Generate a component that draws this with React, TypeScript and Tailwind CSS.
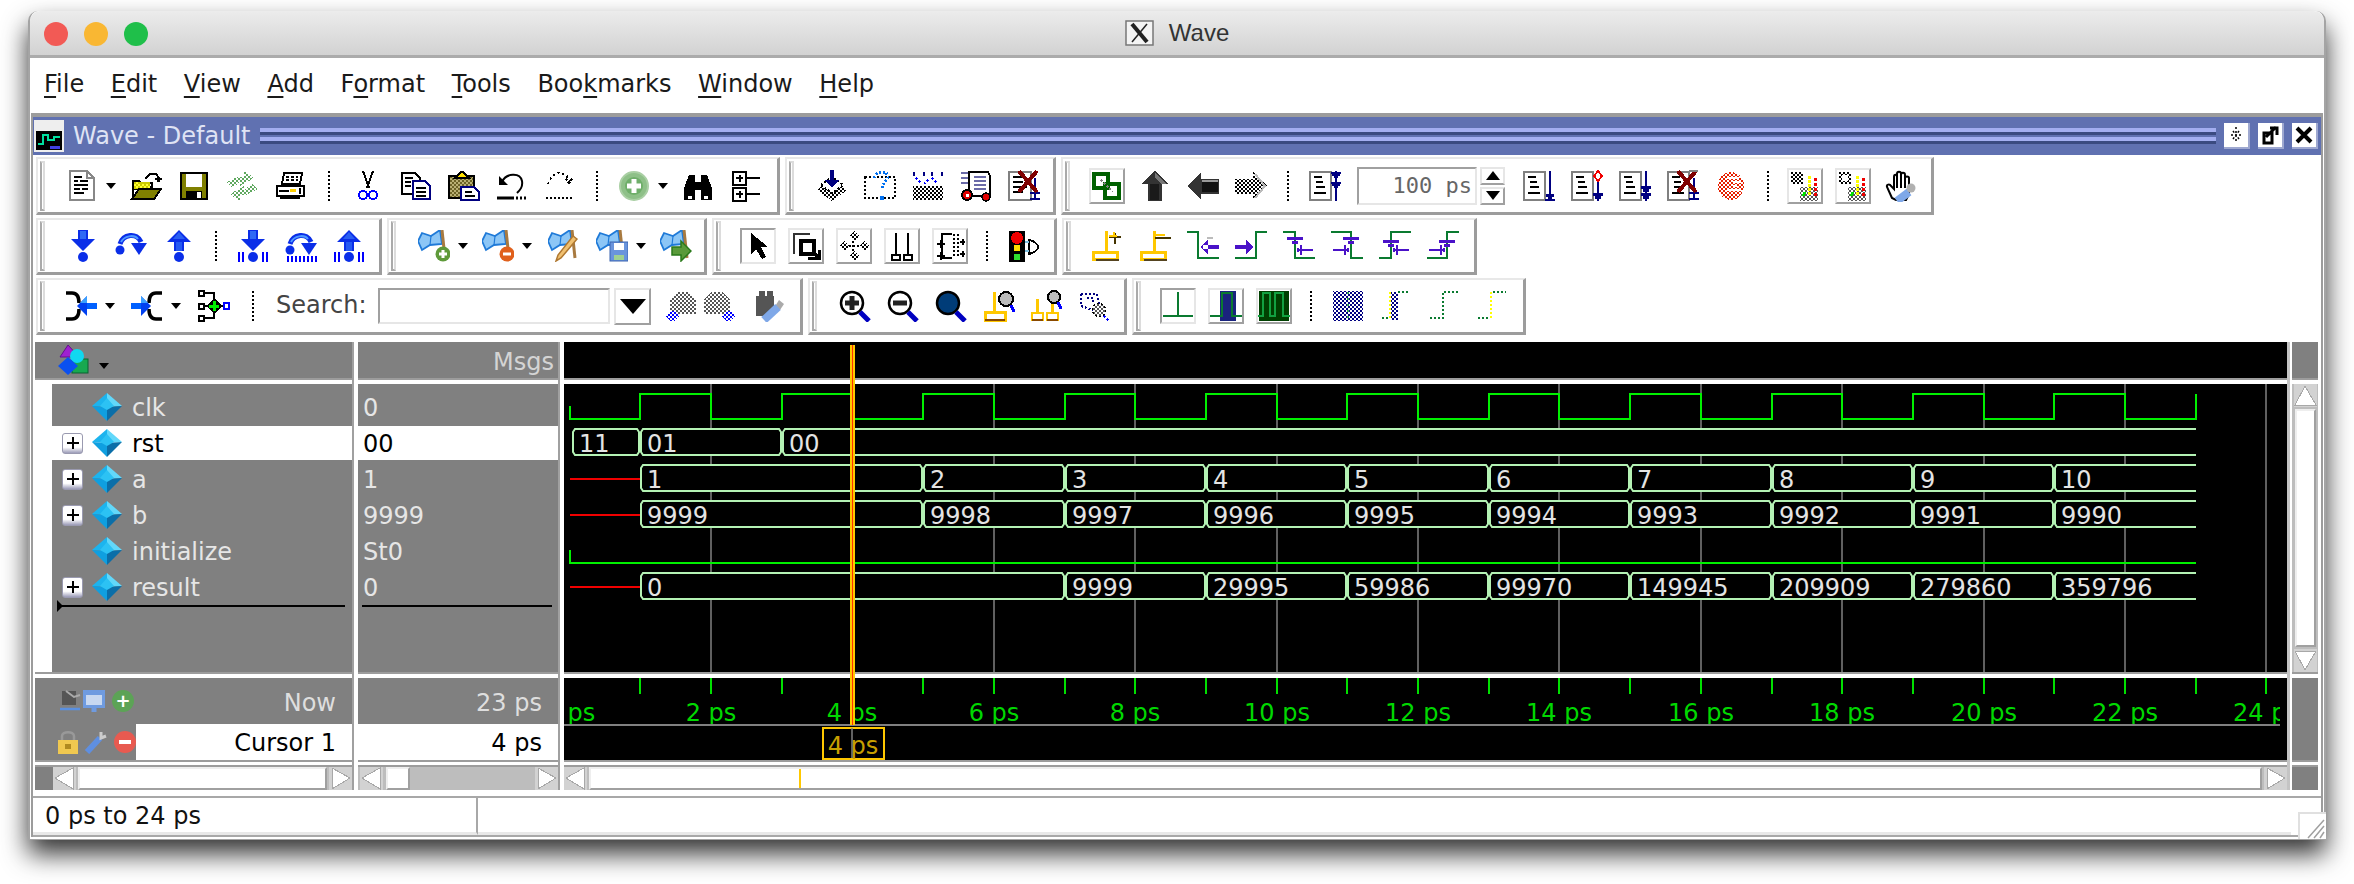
import type { ReactNode } from "react"

// wave geometry: 1 ps = 70.7px, 0 ps at x = 569.6 (page coordinates)
const px = (ps: number) => Math.round(569.6 + 70.7 * ps)

const Ic = ({ children, smooth }: { children: ReactNode; smooth?: boolean }) => (
  <svg viewBox="0 0 32 32" width={32} height={32} fill="none" shapeRendering={smooth ? "auto" : "crispEdges"}>
    {children}
  </svg>
)

const Patterns = () => {
  const list: [string, string][] = [
    ["pk", "#000"],
    ["pb", "#0000ff"],
    ["pn", "#000080"],
    ["pg", "#5fa85f"],
    ["pr", "#e62000"],
    ["pd", "#006000"],
    ["pq", "#555"],
  ]
  return (
    <svg width={0} height={0} className="absolute">
      <defs>
        {list.map(([id, c]) => (
          <pattern key={id} id={id} width={4} height={4} patternUnits="userSpaceOnUse">
            <rect width={2} height={2} fill={c} />
            <rect x={2} y={2} width={2} height={2} fill={c} />
          </pattern>
        ))}
      </defs>
    </svg>
  )
}

const black = "#000"
const navy = "#000080"
const green = "#0a7a30"
const purple = "#4a12c8"
const gold = "#ffc800"

/* ---------- first toolbar row ---------- */
const IDoc = () => (
  <Ic>
    <path d="M4 1H21L28 8V30H4Z" fill="#fff" stroke="#888" strokeWidth={2} />
    <path d="M21 1V8H28" stroke="#888" strokeWidth={2} />
    <path d="M8 7h8M8 11h4M14 11h8M8 15h14M8 19h6M16 19h6M8 23h10" stroke={black} strokeWidth={2} />
  </Ic>
)
const IOpen = () => (
  <Ic>
    <path d="M3 28V11H9L11 13H22V19H3Z" fill="url(#pk)" stroke={black} strokeWidth={2} />
    <rect x={4} y={12} width={16} height={7} fill="#ffff00" opacity={0.8} />
    <path d="M2 29L9 19H31L24 29Z" fill="#808000" stroke={black} strokeWidth={2} />
    <path d="M15 9L20 4H26L29 8M25 9H32M27 11H30" stroke={black} strokeWidth={2} />
  </Ic>
)
const ISave = () => (
  <Ic>
    <rect x={3} y={3} width={26} height={26} fill="#808000" stroke={black} strokeWidth={2} />
    <rect x={8} y={4} width={16} height={13} fill="#fff" />
    <rect x={8} y={21} width={16} height={8} fill={black} />
    <rect x={19} y={22} width={4} height={6} fill="#fff" />
  </Ic>
)
const IReload = () => (
  <Ic>
    <path d="M0 12L12 7H18V0L28 8L14 16V12L6 18Z" fill="url(#pg)" />
    <path d="M32 19L20 25H14V32L4 24L18 16V20L26 14Z" fill="url(#pg)" />
  </Ic>
)
const IPrint = () => (
  <Ic>
    <path d="M10 3H28L26 14H8Z" fill="#fff" stroke={black} strokeWidth={2} />
    <path d="M12 7H24M12 10H24" stroke={black} strokeWidth={2} strokeDasharray="3 2" />
    <path d="M3 16H30V26H3Z" fill="#fff" stroke={black} strokeWidth={2} />
    <path d="M6 28H26" stroke={black} strokeWidth={2} />
    <path d="M16 20H22" stroke="#ffd000" strokeWidth={3} />
    <path d="M5 21H15M26 18V24" stroke={black} strokeWidth={2} />
  </Ic>
)
const ICut = () => (
  <Ic>
    <path d="M11 1L17 18M21 1L15 18" stroke={black} strokeWidth={2} />
    <circle cx={11} cy={25} r={4} stroke="#0000ff" strokeWidth={2} />
    <circle cx={21} cy={25} r={4} stroke="#0000ff" strokeWidth={2} />
  </Ic>
)
const ICopy = () => (
  <Ic>
    <path d="M2 3H15L20 8V24H2Z" fill="#fff" stroke={black} strokeWidth={2} />
    <path d="M5 8h8M5 12h6M5 16h6" stroke={black} strokeWidth={2} />
    <path d="M13 11H25L30 16V29H13Z" fill="#fff" stroke={navy} strokeWidth={2} />
    <path d="M16 18h10M16 22h10M16 26h10" stroke={black} strokeWidth={2} />
  </Ic>
)
const IPaste = () => (
  <Ic>
    <rect x={1} y={6} width={25} height={22} fill="url(#pq)" stroke={black} strokeWidth={2} />
    <rect x={2} y={7} width={23} height={20} fill="#807000" opacity={0.55} />
    <path d="M7 8L13 2H15L21 8Z" fill="#ffe000" stroke={black} strokeWidth={2} />
    <path d="M13 17H26L31 22V30H13Z" fill="#fff" stroke={navy} strokeWidth={2} />
    <path d="M17 22h7M17 26h10" stroke={black} strokeWidth={2} />
  </Ic>
)
const IUndo = () => (
  <Ic smooth>
    <path d="M6 12C10 3 24 2 26 11C27 17 24 20 21 23" stroke={black} strokeWidth={2} />
    <path d="M3 6V15H12Z" fill={black} />
    <path d="M1 28H18" stroke={black} strokeWidth={3} />
    <path d="M20 28H31" stroke={black} strokeWidth={3} strokeDasharray="2 2" />
  </Ic>
)
const IRedo = () => (
  <Ic>
    <path d="M4 14L8 6L14 3L22 5L26 11" stroke={black} strokeWidth={2} strokeDasharray="2 3" />
    <path d="M22 9L28 15M28 9L22 15" stroke={black} strokeWidth={2} strokeDasharray="2 2" />
    <path d="M2 28H30" stroke={black} strokeWidth={2} strokeDasharray="2 2" />
  </Ic>
)
const IAdd = () => (
  <Ic smooth>
    <circle cx={16} cy={16} r={14} fill="#8ec088" stroke="#a9cfa3" strokeWidth={2} />
    <circle cx={16} cy={16} r={9} fill="#6fae6a" />
    <path d="M16 9V23M9 16H23" stroke="#fff" strokeWidth={5} />
  </Ic>
)
const IBinoc = () => (
  <Ic>
    <path d="M2 30V18L7 5H13V30Z M30 30V18L25 5H19V30Z" fill={black} />
    <rect x={13} y={12} width={6} height={8} fill={black} />
    <rect x={6} y={26} width={4} height={3} fill="#fff" />
    <rect x={22} y={26} width={4} height={3} fill="#fff" />
  </Ic>
)
const IExpand = () => (
  <Ic>
    <rect x={3} y={2} width={13} height={13} fill="#fff" stroke={black} strokeWidth={2} />
    <rect x={3} y={18} width={13} height={13} fill="#fff" stroke={black} strokeWidth={2} />
    <path d="M6 8h7M9.5 5v7M6 24h7M9.5 21v7" stroke={black} strokeWidth={2} />
    <path d="M16 8H30M16 24H30" stroke={black} strokeWidth={2} />
  </Ic>
)
const ICompile = () => (
  <Ic>
    <path d="M1 20L16 31L31 20L16 9Z" fill="url(#pk)" />
    <path d="M5 15L16 7L27 15L16 23Z" fill="#fff" stroke={black} strokeWidth={2} strokeDasharray="2 2" />
    <path d="M16 0V12" stroke={navy} strokeWidth={4} />
    <path d="M9 10H23L16 18Z" fill={navy} />
  </Ic>
)
const IHelp = () => (
  <Ic>
    <path d="M1 7H31V28H1Z" stroke={black} strokeWidth={2} strokeDasharray="2 2" />
    <path d="M10 8L14 2H22L24 8L18 16V20" stroke="#0070f0" strokeWidth={3} strokeDasharray="2 2" />
    <rect x={16} y={26} width={4} height={4} fill="#0070f0" />
  </Ic>
)
const IDots = () => (
  <Ic>
    <rect x={1} y={16} width={30} height={14} fill="url(#pk)" />
    <path d="M2 2V6M12 2V6M20 2V6M30 2V6" stroke={navy} strokeWidth={2} />
    <path d="M4 8L10 14M20 8L26 14M12 14L16 10" stroke="#0000ff" strokeWidth={2} strokeDasharray="2 2" />
  </Ic>
)
const ISim = () => (
  <Ic>
    <path d="M9 2H28L30 6V26H9Z" fill="#fff" stroke={black} strokeWidth={2} />
    <path d="M1 3H8M1 8H8M1 13H8M14 7H26M14 11H26M14 15H26M14 19H26" stroke="#6a6aa8" strokeWidth={2} />
    <circle cx={7} cy={25} r={5} fill="#e00000" stroke={black} strokeWidth={2} />
    <rect x={5.5} y={23.5} width={3} height={3} fill="#fff" />
    <circle cx={26} cy={27} r={4} fill="#e00000" stroke={black} strokeWidth={1.5} />
  </Ic>
)
const ICloseDoc = () => (
  <Ic>
    <rect x={1} y={2} width={22} height={28} fill="#fff" stroke="#808080" strokeWidth={2} />
    <path d="M5 7h12M5 12h10M5 17h14M5 22h10" stroke={black} strokeWidth={2} />
    <path d="M27 8V30M22 23h10M22 29h10" stroke={navy} strokeWidth={2} />
    <path d="M11 1L29 22M29 1L11 22" stroke="#800000" strokeWidth={4} />
  </Ic>
)
const ILink = () => (
  <Ic>
    <rect x={3} y={4} width={14} height={14} stroke="#006000" strokeWidth={4} />
    <rect x={14} y={14} width={14} height={14} stroke="#006000" strokeWidth={4} />
    <path d="M10 10L22 22" stroke="#808080" strokeWidth={2} strokeDasharray="2 2" />
  </Ic>
)
const IUp = () => (
  <Ic>
    <path d="M16 1L30 14H23V31H9V14H2Z" fill="#333" />
    <path d="M11 14H20V30H11Z" fill="#1a1a1a" />
    <path d="M16 3L28 14H22L16 7Z" fill="#777" />
  </Ic>
)
const ILeft = () => (
  <Ic>
    <path d="M0 16L14 2V9H32V24H14V30Z" fill="#333" />
    <path d="M15 12H31V22H15Z" fill="#111" />
    <path d="M15 10H31V12H15Z" fill="#999" />
  </Ic>
)
const IRight = () => (
  <Ic>
    <path d="M32 16L18 2V9H0V24H18V30Z" fill="url(#pk)" />
    <path d="M20 4L30 16L20 28" stroke="#bbb" strokeWidth={2} />
  </Ic>
)
const List = ({ children }: { children?: ReactNode }) => (
  <Ic>
    <rect x={1} y={2} width={21} height={28} fill="#fff" stroke="#808080" strokeWidth={2} />
    <path d="M5 7h8M7 12h7M7 17h9M5 23h12" stroke={black} strokeWidth={2} />
    {children}
  </Ic>
)
const IListA = () => (
  <List>
    <path d="M27 1V31" stroke={navy} strokeWidth={2} />
    <path d="M22 3h10M23 5h8M25 7h4M22 13h10M23 15h8M25 17h4" stroke={navy} strokeWidth={2} />
  </List>
)
const IListB = () => (
  <List>
    <path d="M27 1V29M22 30h10" stroke={navy} strokeWidth={2} />
    <path d="M23 25h8M25 27h4" stroke={navy} strokeWidth={3} />
  </List>
)
const IListC = () => (
  <List>
    <path d="M27 1L31 6L27 11L23 6Z" fill="#fff" stroke="#f00000" strokeWidth={2} />
    <path d="M27 12V31" stroke={navy} strokeWidth={2} />
    <path d="M22 24h10M24 27h6" stroke={navy} strokeWidth={3} />
  </List>
)
const IListD = () => (
  <List>
    <path d="M27 1V31" stroke={navy} strokeWidth={2} />
    <path d="M22 17h10M24 20h6M22 24h10M24 27h6" stroke={navy} strokeWidth={3} />
  </List>
)
const IListE = () => (
  <List>
    <path d="M27 8V30M22 23h10M22 29h10" stroke={navy} strokeWidth={2} />
    <path d="M11 1L29 22M29 1L11 22" stroke="#800000" strokeWidth={4} />
    <path d="M22 1L31 1" stroke="#808080" strokeWidth={2} />
  </List>
)
const IStop = () => (
  <Ic>
    <ellipse cx={16} cy={16} rx={13} ry={14} fill="url(#pr)" />
    <path d="M12 8H24M18 12H26M18 16H22M12 20H26" stroke="#fff" strokeWidth={2} />
  </Ic>
)
const IWaveColor = ({ flip }: { flip?: boolean }) => (
  <Ic>
    <rect x={2} y={2} width={12} height={12} fill="url(#pk)" />
    {flip && <rect x={5} y={5} width={6} height={6} fill="#fff" />}
    <rect x={11} y={17} width={18} height={14} fill="url(#pq)" />
    <path d="M20 6V26" stroke="#ffff00" strokeWidth={3} strokeDasharray="3 1" />
    <path d="M26 8V26" stroke="#f00000" strokeWidth={3} strokeDasharray="3 2" />
    <path d="M14 26L16 22" stroke="#00e000" strokeWidth={3} />
  </Ic>
)
const IHand = () => (
  <Ic smooth>
    <path
      d="M7 28L2 17C1 14 5 14 6 16L9 19V7C9 4 12 4 12 7V4C12 1 16 1 16 4V5C16 2 20 2 20 5V8C20 6 24 6 24 8V24L21 30H11Z"
      fill="#fff"
      stroke={black}
      strokeWidth={2}
    />
    <path d="M12 7V18M16 5V18M20 8V18" stroke={black} strokeWidth={2} />
    <path d="M12 31L24 22" stroke="#7fa8e8" strokeWidth={8} />
    <circle cx={26} cy={18} r={4.5} fill="#b0b0b0" />
  </Ic>
)

/* ---------- second toolbar row ---------- */
const blue = "#0a2ee8"
const hi = "#4f9aff"
const Dn = () => (
  <>
    <path d="M11 0H21V9H28L16 21L4 9H11Z" fill={blue} />
    <path d="M13 1H19V9H13Z" fill={hi} opacity={0.55} />
  </>
)
const Up = () => (
  <>
    <path d="M16 0L28 12H21V21H11V12H4Z" fill={blue} />
    <path d="M13 12H19V21H13Z" fill={hi} opacity={0.4} />
    <path d="M16 2L10 9H22Z" fill={hi} opacity={0.45} />
  </>
)
const IStepIn = () => (
  <Ic smooth>
    <Dn />
    <circle cx={16} cy={27} r={5} fill={blue} />
  </Ic>
)
const IStepOutU = () => (
  <Ic smooth>
    <Up />
    <circle cx={16} cy={27} r={5} fill={blue} />
  </Ic>
)
const Over = () => (
  <>
    <path d="M5 14C8 4 22 2 26 12" stroke={blue} strokeWidth={5} />
    <path d="M6 12C9 6 19 4 23 9" stroke={hi} strokeWidth={2} />
    <path d="M16 13H32L24 25Z" fill={blue} />
    <circle cx={5} cy={20} r={4.5} fill={blue} />
  </>
)
const IOver = () => (
  <Ic smooth>
    <Over />
  </Ic>
)
const Bars = () => <path d="M2 22V32M6 22V32M26 22V32M30 22V32" stroke="#0000ff" strokeWidth={2} />
const IStepInB = () => (
  <Ic smooth>
    <Dn />
    <circle cx={16} cy={27} r={5} fill={blue} />
    <Bars />
  </Ic>
)
const IOverB = () => (
  <Ic smooth>
    <Over />
    <path d="M3 26V32M7 26V32M11 26V32M15 26V32M19 26V32M23 26V32M27 26V32M31 26V32" stroke="#0000ff" strokeWidth={2} />
  </Ic>
)
const IStepOutB = () => (
  <Ic smooth>
    <Up />
    <circle cx={16} cy={27} r={5} fill={blue} />
    <Bars />
  </Ic>
)
const FlagBase = ({ children }: { children?: ReactNode }) => (
  <Ic smooth>
    <path d="M0 11L4 3L13 6L22 0L24 14L12 15L4 20Z" fill="#8cc6f6" stroke="#1f7ad8" strokeWidth={1.8} />
    <path d="M13 6L12 15" stroke="#1f7ad8" strokeWidth={1.2} />
    <path d="M24 0L27 28" stroke="#a87a40" strokeWidth={3} />
    {children}
  </Ic>
)
const IFlagAdd = () => (
  <FlagBase>
    <circle cx={25} cy={24} r={7.5} fill="#5f9a3a" />
    <path d="M25 20V28M21 24H29" stroke="#fff" strokeWidth={3} />
  </FlagBase>
)
const IFlagDel = () => (
  <FlagBase>
    <circle cx={25} cy={24} r={7.5} fill="#e0601c" />
    <path d="M21 24H29" stroke="#fff" strokeWidth={3} />
  </FlagBase>
)
const IFlagEdit = () => (
  <FlagBase>
    <path d="M29 9L13 28L8 31L10 25L25 6Z" fill="#f0c070" stroke="#b07830" strokeWidth={1.5} />
  </FlagBase>
)
const IFlagSave = () => (
  <FlagBase>
    <rect x={14} y={12} width={18} height={19} fill="#6a94dc" stroke="#3a64b0" strokeWidth={1} />
    <rect x={18} y={13} width={10} height={7} fill="#fff" />
    <rect x={18} y={25} width={10} height={5} fill="#a0d090" />
  </FlagBase>
)
const IFlagGo = () => (
  <FlagBase>
    <path d="M12 17H21V11L31 21L21 31V25H12Z" fill="#5a9a3a" stroke="#2a7a1a" strokeWidth={1.5} />
  </FlagBase>
)
const IPointer = () => (
  <Ic>
    <path d="M9 3V24L14 19L20 29L24 27L19 17H26Z" fill={black} />
  </Ic>
)
const IZoomBox = () => (
  <Ic>
    <path d="M4 24V4H20" stroke="#333" strokeWidth={2} />
    <rect x={11} y={11} width={13} height={13} stroke={black} strokeWidth={4} />
    <path d="M18 28H29V20M25 24L30 29" stroke={black} strokeWidth={3} />
  </Ic>
)
const IDiamond = () => (
  <Ic>
    <path d="M16 1L21 6L16 11L11 6Z M16 21L21 26L16 31L11 26Z M6 11L11 16L6 21L1 16Z M26 11L31 16L26 21L21 16Z" fill="url(#pk)" />
    <path d="M15 11V21M11 16H21" stroke={black} strokeWidth={2} strokeDasharray="2 2" />
  </Ic>
)
const IPins = () => (
  <Ic>
    <path d="M10 3V26M22 3V26" stroke={black} strokeWidth={2} />
    <rect x={6} y={25} width={8} height={5} fill="#fff" stroke={black} strokeWidth={2} />
    <rect x={18} y={25} width={8} height={5} fill="#fff" stroke={black} strokeWidth={2} />
  </Ic>
)
const IGate = () => (
  <Ic>
    <path d="M18 4H8V28H18" stroke={black} strokeWidth={2} fill="none" />
    <path d="M3 14h8M7 10v8M3 26h8M7 22v8" stroke={black} strokeWidth={2} />
    <path d="M20 4V28M24 4V28" stroke={black} strokeWidth={2} strokeDasharray="2 2" />
    <path d="M26 12h5M28.5 9v6M26 24h5M28.5 21v6" stroke={black} strokeWidth={2} />
  </Ic>
)
const ITraffic = () => (
  <Ic>
    <rect x={1} y={1} width={16} height={31} fill={black} />
    <circle cx={9} cy={8} r={6} fill="#f00000" />
    <rect x={6} y={15} width={6} height={6} fill="#ffe000" />
    <rect x={6} y={24} width={6} height={6} fill="#30e030" />
    <path d="M21 10V24C26 23 30 20 30 17C30 14 26 11 21 10Z" fill="#fff" stroke={black} strokeWidth={2} />
    <path d="M17 12H21M17 21H21" stroke="#7fc0e0" strokeWidth={2} />
  </Ic>
)
const ICursorAdd = () => (
  <Ic>
    <rect x={2} y={22} width={24} height={7} fill="#fff" stroke={gold} strokeWidth={3} />
    <path d="M5 30H28" stroke="#554420" strokeWidth={2} />
    <path d="M15 1V22" stroke={gold} strokeWidth={3} />
    <path d="M18 7H30M24 3V14" stroke="#443300" strokeWidth={2} />
    <path d="M18 6H26M23 2V6" stroke={gold} strokeWidth={2} />
  </Ic>
)
const ICursorDel = () => (
  <Ic>
    <rect x={2} y={22} width={24} height={7} fill="#fff" stroke={gold} strokeWidth={3} />
    <path d="M5 30H28" stroke="#554420" strokeWidth={2} />
    <path d="M15 1V22" stroke={gold} strokeWidth={3} />
    <path d="M16 5H26" stroke={gold} strokeWidth={2} />
    <path d="M16 8H32" stroke="#443300" strokeWidth={2} />
  </Ic>
)
const IEdgeL = () => (
  <Ic>
    <path d="M0 2H11V28H32" stroke={green} strokeWidth={2} />
    <path d="M16 15H32V19H16Z M21 9L14 17L21 25Z" fill={purple} />
    <path d="M20 8H26" stroke="#bbb" strokeWidth={2} />
  </Ic>
)
const IEdgeR = () => (
  <Ic>
    <path d="M0 28H21V2H32" stroke={green} strokeWidth={2} />
    <path d="M0 15H14V19H0Z M11 9L18 17L11 25Z" fill={purple} />
  </Ic>
)
const ISmall = ({ rise, out }: { rise?: boolean; out?: boolean }) => (
  <Ic>
    <path d={rise ? (out ? "M0 28H20V2H32" : "M0 28H12V2H32") : out ? "M0 2H20V28H32" : "M0 2H12V28H32"} stroke={green} strokeWidth={2} />
    <path d={out ? "M12 8H28M17 12H23" : "M4 8H20M9 12H15"} stroke={purple} strokeWidth={3} transform={rise ? "translate(0 3)" : ""} />
    <path
      d={out ? "M2 20H18M14 15V25M17 18V22" : "M16 20H30M18 15V25M15 18V22"}
      stroke={purple}
      strokeWidth={2}
    />
  </Ic>
)

/* ---------- third toolbar row ---------- */
const IFunnelIn = () => (
  <Ic smooth>
    <path d="M1 3H7C12 3 14 7 14 13M1 29H7C12 29 14 25 14 19" stroke={black} strokeWidth={3.5} />
    <path d="M20 13H32V19H20Z" fill="#0060ff" />
    <path d="M22 6L12 16L22 26Z" fill="#0040f0" />
    <path d="M22 6L15 13H22Z" fill="#3aa0ff" />
  </Ic>
)
const IFunnelOut = () => (
  <Ic smooth>
    <path d="M31 3H25C20 3 18 7 18 13M31 29H25C20 29 18 25 18 19" stroke={black} strokeWidth={3.5} />
    <path d="M0 13H12V19H0Z" fill="#0060ff" />
    <path d="M10 6L20 16L10 26Z" fill="#0040f0" />
    <path d="M10 6L17 13H10Z" fill="#3aa0ff" />
  </Ic>
)
const ITree = () => (
  <Ic>
    <rect x={1} y={1} width={5} height={5} fill="#fff" stroke={black} strokeWidth={2} />
    <rect x={1} y={14} width={5} height={5} fill="#fff" stroke={black} strokeWidth={2} />
    <rect x={1} y={26} width={5} height={5} fill="#fff" stroke={black} strokeWidth={2} />
    <path d="M7 3H16V28H7M7 16H16" stroke={black} strokeWidth={2} />
    <path d="M16 8L24 16L16 24L8 16Z" fill={black} />
    <path d="M16 11V21M11 16H21" stroke="#00f000" strokeWidth={3} />
    <path d="M22 16H27" stroke="#000" strokeWidth={2} />
    <rect x={26} y={13} width={5} height={6} fill="#fff" stroke="#0000ff" strokeWidth={2} />
  </Ic>
)
const ISearchPrev = () => (
  <Ic>
    <path d="M6 24V10L13 2H25L32 10V24Z" fill="url(#pq)" />
    <path d="M1 26L6 21H10L15 26L10 31H6Z" fill="url(#pb)" />
  </Ic>
)
const ISearchNext = () => (
  <Ic>
    <path d="M0 24V10L7 2H19L26 10V24Z" fill="url(#pq)" />
    <path d="M17 26L22 21H26L31 26L26 31H22Z" fill="url(#pb)" />
  </Ic>
)
const IWrench = () => (
  <Ic smooth>
    <rect x={2} y={6} width={18} height={20} fill="#555" />
    <rect x={5} y={1} width={6} height={6} fill="#555" />
    <rect x={13} y={1} width={6} height={6} fill="#555" />
    <path d="M25 10L30 14L26 20L20 18Z" fill="#aaa" />
    <path d="M10 30L24 17" stroke="#7fa8e8" strokeWidth={8} />
  </Ic>
)
const Mag = ({ children, fill = "#fff" }: { children?: ReactNode; fill?: string }) => (
  <Ic smooth>
    <circle cx={13} cy={13} r={11} fill={fill} stroke={black} strokeWidth={2.5} />
    {children}
    <path d="M21 22L30 31" stroke="#0000c0" strokeWidth={5} />
  </Ic>
)
const IZoomIn = () => (
  <Mag>
    <path d="M13 6V20M6 13H20" stroke="#222" strokeWidth={5} />
  </Mag>
)
const IZoomOut = () => (
  <Mag>
    <path d="M6 13H20" stroke="#222" strokeWidth={5} />
  </Mag>
)
const IZoomFull = () => <Mag fill="#003c78" />
const IZoomCur = () => (
  <Ic>
    <rect x={2} y={22} width={20} height={8} fill="#fff" stroke={gold} strokeWidth={3} />
    <path d="M2 30H22" stroke="#8a4a00" strokeWidth={2} />
    <path d="M11 2V22" stroke={gold} strokeWidth={3} />
    <circle cx={23} cy={9} r={7} fill="#bbb" stroke={black} strokeWidth={2} />
    <path d="M28 15L31 22" stroke="#0000ff" strokeWidth={3} />
  </Ic>
)
const IZoomCur2 = () => (
  <Ic>
    <rect x={1} y={23} width={11} height={7} fill="#fff" stroke={gold} strokeWidth={2} />
    <rect x={16} y={23} width={11} height={7} fill="#fff" stroke={gold} strokeWidth={2} />
    <path d="M6 9V23M21 5V23" stroke={gold} strokeWidth={3} />
    <path d="M1 30H12M16 30H27" stroke="#8a4a00" strokeWidth={2} />
    <circle cx={23} cy={7} r={6} fill="#bbb" stroke={black} strokeWidth={2} />
    <path d="M27 12L30 19" stroke="#0000ff" strokeWidth={3} />
  </Ic>
)
const IZoomDot = () => (
  <Ic>
    <path d="M2 4H18L20 14M2 4V16L14 20" stroke="#000080" strokeWidth={2} strokeDasharray="2 2" />
    <path d="M8 8H14V14" stroke="#000080" strokeWidth={2} strokeDasharray="2 2" />
    <circle cx={20} cy={20} r={6.5} fill="url(#pq)" stroke={black} strokeWidth={1.5} strokeDasharray="2 2" />
    <path d="M25 26L31 32" stroke="#0000ff" strokeWidth={2} strokeDasharray="2 2" />
  </Ic>
)
const IFmtLine = () => (
  <Ic>
    <path d="M16 2V26M1 26H31" stroke={green} strokeWidth={2} />
  </Ic>
)
const IFmtPulse = () => (
  <Ic>
    <rect x={10} y={1} width={16} height={30} fill="#1a237e" />
    <path d="M0 26H12V3H22V26H32" stroke={green} strokeWidth={2} />
  </Ic>
)
const IFmtFull = () => (
  <Ic>
    <rect x={1} y={1} width={30} height={30} fill="#004000" />
    <path d="M0 26H5V3H12V26H17V3H25V26H32" stroke="#12a040" strokeWidth={2} />
  </Ic>
)
const IDithBlue = () => (
  <Ic>
    <rect x={1} y={1} width={30} height={30} fill="url(#pn)" />
    <path d="M16 2V30" stroke="#2ea050" strokeWidth={2} strokeDasharray="2 4" />
  </Ic>
)
const IDithEdge = () => (
  <Ic>
    <rect x={10} y={2} width={8} height={28} fill="url(#pn)" />
    <path d="M10 2V28" stroke="#ffff00" strokeWidth={2} strokeDasharray="2 2" />
    <path d="M18 2H30M2 28H10" stroke={green} strokeWidth={2} strokeDasharray="2 2" />
  </Ic>
)
const IDithGreen = () => (
  <Ic>
    <path d="M2 28H15V2H30" stroke={green} strokeWidth={2} strokeDasharray="2 2" />
  </Ic>
)
const IDithYellow = () => (
  <Ic>
    <path d="M2 28H13" stroke={green} strokeWidth={2} strokeDasharray="2 2" />
    <path d="M15 2V28" stroke="#ffff00" strokeWidth={2} strokeDasharray="2 2" />
    <path d="M17 2H30" stroke={green} strokeWidth={2} strokeDasharray="2 2" />
  </Ic>
)

/* ---------- toolbar parts ---------- */
const Btn = ({ children }: { children: ReactNode }) => (
  <div className="flex h-[36px] w-[48px] shrink-0 items-center justify-center">{children}</div>
)
const Raised = ({ children }: { children: ReactNode }) => (
  <div className="mx-[6px] flex h-[36px] w-[36px] shrink-0 items-center justify-center border-2 border-[#e6e6e6] border-r-[#a0a0a0] border-b-[#a0a0a0]">
    {children}
  </div>
)
const Pressed = ({ children }: { children: ReactNode }) => (
  <div className="mx-[6px] flex h-[36px] w-[36px] shrink-0 items-center justify-center border-2 border-[#a0a0a0] border-r-[#e6e6e6] border-b-[#e6e6e6]">
    {children}
  </div>
)
const Caret = () => (
  <div className="w-[16px] shrink-0">
    <div className="h-0 w-0 border-x-[5px] border-t-[6px] border-x-transparent border-t-black" />
  </div>
)
const Sep = ({ w }: { w: string }) => (
  <div className={`flex shrink-0 justify-center ${w}`}>
    <div className="h-[30px] w-[2px] bg-[repeating-linear-gradient(to_bottom,#000_0,#000_2px,transparent_2px,transparent_4px)]" />
  </div>
)
const Grip = ({ className }: { className: string }) => (
  <div className={`h-[50px] w-[5px] shrink-0 border-2 border-[#dcdcdc] border-b-[#aaaaaa] border-l-[#aaaaaa] ${className}`} />
)
const Bar = ({ children, className }: { children: ReactNode; className: string }) => (
  <div className={`flex h-full shrink-0 items-center border-t-2 border-r-[3px] border-b-[3px] border-l-2 border-[#e8e8e8] border-r-[#9c9c9c] border-b-[#9c9c9c] pl-[2px] ${className}`}>
    {children}
  </div>
)

const menus: [string, string, string][] = [
  ["", "F", "ile"],
  ["", "E", "dit"],
  ["", "V", "iew"],
  ["", "A", "dd"],
  ["F", "o", "rmat"],
  ["", "T", "ools"],
  ["Boo", "k", "marks"],
  ["", "W", "indow"],
  ["", "H", "elp"],
]

/* ---------- wave pane ---------- */
const Diamond = () => (
  <svg viewBox="0 0 30 28" width={30} height={28} className="shrink-0">
    <path d="M15 0L0 13L15 14Z" fill="#1cb4ee" />
    <path d="M15 0L30 13L15 14Z" fill="#62d8fa" />
    <path d="M0 13L15 28L15 14Z" fill="#0f9fe0" />
    <path d="M30 13L15 28L15 14Z" fill="#0b6ea8" />
    <path d="M15 5L8 13L15 17L22 13Z" fill="#2cc2f4" />
  </svg>
)
const PlusBox = () => (
  <div className="flex h-[21px] w-[21px] shrink-0 items-center justify-center rounded-[3px] border border-[#9a9ab0] bg-[linear-gradient(#fff_70%,#9c9cb8)]">
    <svg viewBox="0 0 12 12" width={12} height={12} shapeRendering="crispEdges">
      <path d="M6 0V12M0 6H12" stroke="#000" strokeWidth={2} />
    </svg>
  </div>
)
const signals = [
  { name: "clk", value: "0" },
  { name: "rst", value: "00", plus: true, active: true },
  { name: "a", value: "1", plus: true },
  { name: "b", value: "9999", plus: true },
  { name: "initialize", value: "St0" },
  { name: "result", value: "0", plus: true },
]
const Split = ({ low }: { low?: boolean }) => (
  <div className={low ? "h-[7px] border-y-2 border-[#9c9c9c] bg-white" : "h-[6px] border-t-2 border-[#9c9c9c] bg-white"} />
)
const Arrow = ({ dir }: { dir: "l" | "r" | "u" | "d" }) => {
  const pts = { l: "20,1 20,22 2,11", r: "3,1 3,22 21,11", u: "1,21 22,21 11,2", d: "1,2 22,2 11,21" }[dir]
  return (
    <svg viewBox="0 0 23 23" width={23} height={23} className="shrink-0 bg-[#d2d2d2]" shapeRendering="crispEdges">
      <polygon points={pts} fill="#fff" stroke="#a8a8a8" strokeWidth={1} />
    </svg>
  )
}
const thumb = "border-2 border-[#eeeeee] border-r-[#a0a0a0] border-b-[#a0a0a0] bg-white"

type Seg = [number, string]
const busA: Seg[] = [[1, "1"], [5, "2"], [7, "3"], [9, "4"], [11, "5"], [13, "6"], [15, "7"], [17, "8"], [19, "9"], [21, "10"]]
const busB: Seg[] = [[1, "9999"], [5, "9998"], [7, "9997"], [9, "9996"], [11, "9995"], [13, "9994"], [15, "9993"], [17, "9992"], [19, "9991"], [21, "9990"]]
const busR: Seg[] = [[1, "0"], [7, "9999"], [9, "29995"], [11, "59986"], [13, "99970"], [15, "149945"], [17, "209909"], [19, "279860"], [21, "359796"]]
const busRst: Seg[] = [[0.03, "11"], [1, "01"], [3, "00"]]

const Bus = ({ segs, top }: { segs: Seg[]; top: number }) => {
  const bot = top + 26
  const end = px(23)
  return (
    <>
      {segs.map(([ps, label], i) => {
        const x0 = px(ps) + 1
        const next = segs[i + 1]
        const x1 = next ? px(next[0]) - 1 : end
        const d = next
          ? `M${x0 + 2} ${top}H${x1 - 2}L${x1} ${top + 3}V${bot - 3}L${x1 - 2} ${bot}H${x0 + 2}L${x0} ${bot - 3}V${top + 3}Z`
          : `M${end} ${top}H${x0 + 2}L${x0} ${top + 3}V${bot - 3}L${x0 + 2} ${bot}H${end}`
        return (
          <g key={i}>
            <path d={d} stroke="#b4f2b4" strokeWidth={2} />
            <text x={x0 + 6} y={top + 23} fontSize={24} fill="#e4e4e4">
              {label}
            </text>
          </g>
        )
      })}
    </>
  )
}

const clkPath = () => {
  let d = `M${px(0)} 406V419`
  for (let ps = 1; ps <= 23; ps++) d += `H${px(ps)}V${ps % 2 ? 394 : 419}`
  return d
}

const grids = Array.from({ length: 12 }, (_, i) => px((i + 1) * 2))

const WaveBody = () => (
  <svg viewBox="564 384 1723 288" width={1723} height={288} className="block">
    {grids.map((x) => (
      <path key={x} d={`M${x} 384V672`} stroke="#808080" strokeWidth={1.5} />
    ))}
    <path d={clkPath()} stroke="#00f000" strokeWidth={2} fill="none" />
    <Bus segs={busRst} top={429} />
    <Bus segs={busA} top={465} />
    <Bus segs={busB} top={501} />
    <Bus segs={busR} top={573} />
    <path d={`M${px(0)} 479H${px(1)}M${px(0)} 515H${px(1)}M${px(0)} 587H${px(1)}`} stroke="#f00000" strokeWidth={2} />
    <path d={`M${px(0)} 550V563H${px(23)}`} stroke="#00f000" strokeWidth={2} fill="none" />
  </svg>
)

const WaveRuler = () => (
  <svg viewBox="564 678 1723 82" width={1723} height={82} className="block">
    {Array.from({ length: 24 }, (_, i) => (
      <path key={i} d={`M${px(i + 1)} 678V694`} stroke="#00e000" strokeWidth={2} />
    ))}
    {Array.from({ length: 13 }, (_, i) => (
      <text key={i} x={px(i * 2)} y={721} fontSize={24} fill="#00d800" textAnchor="middle">
        {i * 2} ps
      </text>
    ))}
    <rect x={2280} y={695} width={10} height={40} fill="#000" />
    <path d="M564 725H2280" stroke="#808080" strokeWidth={2} />
    <rect x={823} y={728} width={61} height={31} stroke={gold} strokeWidth={2} fill="none" />
    <text x={853} y={754} fontSize={24} fill="#c8a000" textAnchor="middle">
      4 ps
    </text>
    <path d="M852 728V758" stroke="#808080" strokeWidth={1.5} />
  </svg>
)

const SmallIcon = ({ children }: { children: ReactNode }) => (
  <svg viewBox="0 0 24 24" width={24} height={24} className="shrink-0">
    {children}
  </svg>
)

export default function App() {
  return (
    <div className="h-[884px] w-[2354px] overflow-hidden bg-white pt-[11px] pl-[28px] font-['DejaVu_Sans',sans-serif] text-[24px] leading-none">
      <Patterns />
      <div className="relative h-[829px] w-[2298px] rounded-t-[10px] border-x-2 border-b border-[#a4a4a4] bg-white shadow-[0_14px_26px_rgba(0,0,0,0.8)]">
        {/* mac title bar */}
        <div className="relative flex h-[47px] items-center justify-center rounded-t-[10px] border-b-[3px] border-[#ababab] bg-[linear-gradient(#ececec,#d2d2d2)]">
          <div className="absolute top-[11px] left-[14px] flex gap-[16px]">
            <div className="h-[24px] w-[24px] rounded-full bg-[#f25a55]" />
            <div className="h-[24px] w-[24px] rounded-full bg-[#f9b733]" />
            <div className="h-[24px] w-[24px] rounded-full bg-[#1fbf4a]" />
          </div>
          <svg viewBox="0 0 29 26" width={29} height={26} className="mr-[15px]">
            <rect x={1} y={1} width={27} height={24} fill="#f4f4f4" stroke="#777" strokeWidth={1.5} />
            <path d="M7 4L22 22" stroke="#222" strokeWidth={4} />
            <path d="M22 4L7 22" stroke="#222" strokeWidth={1.5} />
          </svg>
          <span className="font-['Liberation_Sans',sans-serif] text-[#333]">Wave</span>
        </div>

        {/* menu */}
        <div className="flex h-[55px] items-center gap-[26.6px] pb-[3px] pl-[14px] text-[#1a1a1a]">
          {menus.map(([a, u, b]) => (
            <span key={a + u + b}>
              {a}
              <span className="underline decoration-2 underline-offset-[4px]">{u}</span>
              {b}
            </span>
          ))}
        </div>

        {/* wave sub window */}
        <div className="mx-px border-x-2 border-t-4 border-[#9c9c9c]">
          <div className="flex h-[38px] items-center bg-[#6071b1] pr-[3px] pl-[1px]">
            <svg viewBox="0 0 30 32" width={30} height={32} className="shrink-0" shapeRendering="crispEdges">
              <rect width={30} height={32} fill="#eeeeee" />
              <rect x={2} y={11} width={26} height={19} fill="#000" />
              <path d="M4 24H9V15H14V20H20V17H26" stroke="#00e0a0" strokeWidth={2} fill="none" />
              <path d="M16 27H26" stroke="#4040e0" strokeWidth={3} />
            </svg>
            <span className="ml-[9px] text-[#dfe3f4]">Wave - Default</span>
            <div className="ml-[10px] flex h-[16px] flex-1 flex-col justify-between">
              <div className="h-[7px] border-b-[3px] border-[#3a4a80] bg-[#a3aef0]" />
              <div className="h-[7px] border-b-[3px] border-[#3a4a80] bg-[#a3aef0]" />
            </div>
            <div className="ml-[8px] flex items-center gap-[8px]">
              {[
                <path key="a" d="M12 4V20M7 12H17M9 8L15 16M15 8L9 16" stroke="#000" strokeWidth={1.5} strokeDasharray="2 2" fill="none" />,
                <path key="b" d="M6 10H14V20H6ZM8 14L18 4M12 5H19V12" stroke="#000" strokeWidth={3} fill="none" />,
                <path key="c" d="M5 5L19 19M19 5L5 19" stroke="#000" strokeWidth={4} fill="none" />,
              ].map((p) => (
                <svg key={p.key} viewBox="0 0 24 24" width={26} height={26} className="shrink-0 border-r-2 border-b-2 border-[#9ea8d0] bg-white">
                  {p}
                </svg>
              ))}
            </div>
          </div>

          {/* toolbars */}
          <div className="flex flex-col gap-[3px] pt-[2px] pl-[3px]">
            <div className="flex h-[58px] gap-[5px]">
              <Bar className="pr-[7px]">
                <Grip className="mr-[13px]" />
                <Btn><IDoc /></Btn>
                <Caret />
                <Btn><IOpen /></Btn>
                <Btn><ISave /></Btn>
                <Btn><IReload /></Btn>
                <Btn><IPrint /></Btn>
                <Sep w="w-[30px]" />
                <Btn><ICut /></Btn>
                <Btn><ICopy /></Btn>
                <Btn><IPaste /></Btn>
                <Btn><IUndo /></Btn>
                <Btn><IRedo /></Btn>
                <Sep w="w-[26px]" />
                <Btn><IAdd /></Btn>
                <Caret />
                <Btn><IBinoc /></Btn>
                <Btn><IExpand /></Btn>
              </Bar>
              <Bar className="pr-[5px]">
                <Grip className="mr-[14px]" />
                <Btn><ICompile /></Btn>
                <Btn><IHelp /></Btn>
                <Btn><IDots /></Btn>
                <Btn><ISim /></Btn>
                <Btn><ICloseDoc /></Btn>
              </Bar>
              <Bar className="pr-[6px]">
                <Grip className="mr-[13px]" />
                <Raised><ILink /></Raised>
                <Btn><IUp /></Btn>
                <Btn><ILeft /></Btn>
                <Btn><IRight /></Btn>
                <Sep w="w-[26px]" />
                <Btn><IListA /></Btn>
                <div className="ml-[8px] flex h-[38px] w-[120px] items-center justify-end border-2 border-[#a0a0a0] border-r-[#e6e6e6] border-b-[#e6e6e6] pr-[3px] font-['DejaVu_Sans_Mono',monospace] text-[22px] text-[#666]">
                  100 ps
                </div>
                <div className="mr-[10px] ml-[3px] flex flex-col gap-[2px]">
                  <div className="flex h-[18px] w-[25px] items-center justify-center border-2 border-[#e6e6e6] border-b-[#a0a0a0]">
                    <div className="h-0 w-0 border-x-[7px] border-b-[9px] border-x-transparent border-b-black" />
                  </div>
                  <div className="flex h-[18px] w-[25px] items-center justify-center border-2 border-[#e6e6e6] border-r-[#a0a0a0] border-b-[#a0a0a0]">
                    <div className="h-0 w-0 border-x-[7px] border-t-[9px] border-x-transparent border-t-black" />
                  </div>
                </div>
                <Btn><IListB /></Btn>
                <Btn><IListC /></Btn>
                <Btn><IListD /></Btn>
                <Btn><IListE /></Btn>
                <Btn><IStop /></Btn>
                <Sep w="w-[26px]" />
                <Raised><IWaveColor /></Raised>
                <Raised><IWaveColor flip /></Raised>
                <Btn><IHand /></Btn>
              </Bar>
            </div>

            <div className="flex h-[57px] gap-[5px]">
              <Bar className="pr-[6px]">
                <Grip className="mr-[14px]" />
                <Btn><IStepIn /></Btn>
                <Btn><IOver /></Btn>
                <Btn><IStepOutU /></Btn>
                <Sep w="w-[26px]" />
                <Btn><IStepInB /></Btn>
                <Btn><IOverB /></Btn>
                <Btn><IStepOutB /></Btn>
              </Bar>
              <Bar className="pr-[4px]">
                <Grip className="mr-[14px]" />
                <Btn><IFlagAdd /></Btn>
                <Caret />
                <Btn><IFlagDel /></Btn>
                <Caret />
                <div className="ml-[2px]"><Btn><IFlagEdit /></Btn></div>
                <Btn><IFlagSave /></Btn>
                <Caret />
                <Btn><IFlagGo /></Btn>
              </Bar>
              <Bar className="pr-[6px]">
                <Grip className="mr-[13px]" />
                <Pressed><IPointer /></Pressed>
                <Raised><IZoomBox /></Raised>
                <Raised><IDiamond /></Raised>
                <Raised><IPins /></Raised>
                <Raised><IGate /></Raised>
                <Sep w="w-[26px]" />
                <Btn><ITraffic /></Btn>
              </Bar>
              <Bar className="pr-[7px]">
                <Grip className="mr-[12px]" />
                <Btn><ICursorAdd /></Btn>
                <Btn><ICursorDel /></Btn>
                <Btn><IEdgeL /></Btn>
                <Btn><IEdgeR /></Btn>
                <Btn><ISmall /></Btn>
                <Btn><ISmall out /></Btn>
                <Btn><ISmall rise /></Btn>
                <Btn><ISmall rise out /></Btn>
              </Bar>
            </div>

            <div className="flex h-[57px] gap-[5px]">
              <Bar className="pr-[14px]">
                <Grip className="mr-[12px]" />
                <Btn><IFunnelIn /></Btn>
                <Caret />
                <div className="ml-[2px]"><Btn><IFunnelOut /></Btn></div>
                <Caret />
                <div className="ml-[3px]"><Btn><ITree /></Btn></div>
                <Sep w="w-[30px]" />
                <span className="mb-[3px] ml-[8px] w-[102px] text-[#444]">Search:</span>
                <div className="h-[36px] w-[232px] border-2 border-[#a0a0a0] border-r-[#e6e6e6] border-b-[#e6e6e6]" />
                <div className="ml-[4px] flex h-[37px] w-[37px] items-center justify-center border-2 border-[#e6e6e6] border-r-[#a0a0a0] border-b-[#a0a0a0]">
                  <div className="h-0 w-0 border-x-[13px] border-t-[15px] border-x-transparent border-t-black" />
                </div>
                <div className="ml-[13px] w-[40px]"><ISearchPrev /></div>
                <ISearchNext />
                <div className="ml-[18px]"><IWrench /></div>
              </Bar>
              <Bar className="pr-[5px]">
                <Grip className="mr-[14px]" />
                <Btn><IZoomIn /></Btn>
                <Btn><IZoomOut /></Btn>
                <Btn><IZoomFull /></Btn>
                <Btn><IZoomCur /></Btn>
                <Btn><IZoomCur2 /></Btn>
                <Btn><IZoomDot /></Btn>
              </Bar>
              <Bar className="pr-[7px]">
                <Grip className="mr-[13px]" />
                <Pressed><IFmtLine /></Pressed>
                <Raised><IFmtPulse /></Raised>
                <Raised><IFmtFull /></Raised>
                <Sep w="w-[26px]" />
                <Btn><IDithBlue /></Btn>
                <Btn><IDithEdge /></Btn>
                <Btn><IDithGreen /></Btn>
                <Btn><IDithYellow /></Btn>
              </Bar>
            </div>
          </div>

          {/* panes */}
          <div className="mt-[7px] flex h-[448px] pl-[2px]">
            {/* names */}
            <div className="mr-[4px] flex w-[319px] shrink-0 flex-col border-r-2 border-[#a0a0a0]">
              <div className="flex h-[36px] items-center bg-[#808080] pl-[23px]">
                <svg viewBox="0 0 32 30" width={32} height={30}>
                  <path d="M10 0L21 12H2Z" fill="#a020d0" stroke="#60108a" strokeWidth={1} />
                  <rect x={14} y={14} width={16} height={14} fill="#18a850" stroke="#0a6030" strokeWidth={1} />
                  <circle cx={19} cy={11} r={7} fill="#10d8f0" />
                  <path d="M10 12L20 21L10 30L0 21Z" fill="#0a50f0" />
                </svg>
                <div className="mt-[12px] ml-[9px] h-0 w-0 border-x-[5px] border-t-[6px] border-x-transparent border-t-black" />
              </div>
              <Split />
              <div className="relative h-[288px] bg-white pl-[17px]">
                <div className="h-full bg-[#808080] pt-[5px]">
                  {signals.map((s) => (
                    <div
                      key={s.name}
                      className={`flex h-[36px] items-center ${s.active ? "bg-white bg-clip-content py-px text-black" : "text-[#e6e6e6]"}`}
                    >
                      <div className="ml-[10px] flex w-[30px] shrink-0 items-center">{s.plus && <PlusBox />}</div>
                      <Diamond />
                      <span className="ml-[10px] pt-[2px]">{s.name}</span>
                    </div>
                  ))}
                  <div className="ml-[6px] h-[2px] w-[287px] bg-black" />
                </div>
                <div className="absolute top-[216px] left-[22px] h-0 w-0 border-y-[6px] border-l-[6px] border-y-transparent border-l-black" />
              </div>
              <Split />
              <div className="flex h-[46px] items-center bg-[#808080] pr-[16px] pl-[23px]">
                <SmallIcon>
                  <rect x={4} y={2} width={14} height={14} fill="#555" />
                  <path d="M2 20H22" stroke="#5a90e0" strokeWidth={2.5} />
                  <path d="M8 2L16 8L22 6" stroke="#aaa" strokeWidth={2} fill="none" />
                </SmallIcon>
                <SmallIcon>
                  <rect x={1} y={1} width={22} height={18} fill="#6f9be0" />
                  <rect x={4} y={6} width={16} height={10} fill="#c8d8f0" />
                  <path d="M12 19V23" stroke="#6f9be0" strokeWidth={5} />
                </SmallIcon>
                <div className="ml-[6px] flex h-[22px] w-[22px] items-center justify-center rounded-full bg-[#5ca356] text-[18px] leading-none font-bold text-white">+</div>
                <span className="ml-auto pt-[3px] text-[#dedede]">Now</span>
              </div>
              <div className="flex h-[36px] items-center bg-[#808080] pl-[21px]">
                <SmallIcon>
                  <path d="M6 11V6C6 1 18 1 18 6V11" stroke="#999" strokeWidth={2.5} fill="none" />
                  <rect x={2} y={10} width={20} height={14} fill="#f0c850" />
                  <rect x={9} y={14} width={6} height={5} fill="#b08a20" />
                </SmallIcon>
                <div className="ml-[4px]">
                  <SmallIcon>
                    <path d="M3 22L16 8" stroke="#5f8fe0" strokeWidth={6} />
                    <path d="M17 2V8L22 6" stroke="#cccccc" strokeWidth={3} fill="none" />
                  </SmallIcon>
                </div>
                <div className="ml-[6px] flex h-[22px] w-[22px] items-center justify-center rounded-full bg-[#e85a50]">
                  <div className="h-[4px] w-[12px] bg-white" />
                </div>
                <div className="flex h-full flex-1 items-center justify-end bg-white pt-[2px] pr-[16px] text-black">Cursor 1</div>
              </div>
              <Split low />
              <div className="flex h-[23px] bg-[#808080] pl-[18px]">
                <div className="flex h-full flex-1 bg-[#bdbdbd]">
                  <Arrow dir="l" />
                  <div className={`mx-[2px] flex-1 ${thumb}`} />
                  <Arrow dir="r" />
                </div>
              </div>
            </div>

            {/* values */}
            <div className="mr-[4px] flex w-[202px] shrink-0 flex-col border-r-2 border-[#a0a0a0]">
              <div className="flex h-[36px] items-center justify-end bg-[#808080] pt-[3px] pr-[4px] text-[#d4d4d4]">Msgs</div>
              <Split />
              <div className="h-[288px] bg-[#808080] pt-[5px]">
                {signals.map((s) => (
                  <div
                    key={s.name}
                    className={`flex h-[36px] items-center ${s.active ? "bg-white bg-clip-content py-px text-black" : "text-[#e6e6e6]"}`}
                  >
                    <span className="ml-[5px] pt-[2px]">{s.value}</span>
                  </div>
                ))}
                <div className="ml-[4px] h-[2px] w-[190px] bg-black" />
              </div>
              <Split />
              <div className="flex h-[46px] items-center justify-end bg-[#808080] pt-[3px] pr-[16px] text-[#dedede]">23 ps</div>
              <div className="flex h-[36px] items-center justify-end bg-white pt-[2px] pr-[16px] text-black">4 ps</div>
              <Split low />
              <div className="flex h-[23px] bg-[#bdbdbd] pl-[2px]">
                <Arrow dir="l" />
                <div className={`ml-[3px] w-[24px] ${thumb}`} />
                <div className="flex-1" />
                <Arrow dir="r" />
              </div>
            </div>

            {/* waves */}
            <div className="relative mr-[2px] flex w-[1726px] shrink-0 flex-col border-r-[3px] border-[#c4c4c4]">
              <div className="h-[36px] bg-black" />
              <Split />
              <div className="h-[288px] bg-black">
                <WaveBody />
              </div>
              <Split />
              <div className="h-[82px] bg-black">
                <WaveRuler />
              </div>
              <Split low />
              <div className="relative flex h-[23px] bg-[#bdbdbd]">
                <Arrow dir="l" />
                <div className={`mx-[2px] flex-1 ${thumb}`} />
                <Arrow dir="r" />
                <div className="absolute top-[2px] left-[235px] h-[19px] w-[2px] bg-[#ffc800]" />
              </div>
              <div className="absolute top-[3px] left-[286px] flex h-[380px] w-[5px] justify-center bg-[#ffc800]">
                <div className="h-full w-px bg-[#ff3000]" />
              </div>
            </div>

            {/* vertical scroll column */}
            <div className="flex w-[26px] shrink-0 flex-col">
              <div className="h-[36px] bg-[#808080]" />
              <Split />
              <div className="flex h-[288px] flex-col items-center bg-[#bdbdbd]">
                <Arrow dir="u" />
                <div className={`my-[2px] w-[21px] flex-1 ${thumb}`} />
                <Arrow dir="d" />
              </div>
              <Split />
              <div className="h-[82px] bg-[#808080]" />
              <Split low />
              <div className="h-[23px] bg-[#808080]" />
            </div>
          </div>

          {/* status bar */}
          <div className="mt-[6px] flex h-[41px] border-t-2 border-b-[2px] border-t-[#a8a8a8] border-b-[#a8a8a8]">
            <div className="flex h-full w-[445px] items-center border-r-2 border-b-[3px] border-r-[#a8a8a8] border-b-[#e8e8e8] pt-[2px] pl-[12px] text-[#111]">0 ps to 24 ps</div>
            <div className="w-[1813px] border-b-[3px] border-[#e8e8e8]" />
          </div>
        </div>

        {/* resize grip */}
        <div className="absolute right-[-2px] bottom-0 h-[27px] w-[28px] border-t-2 border-l-2 border-[#e0e0e0] bg-white">
          <svg viewBox="0 0 26 25" width={26} height={25}>
            <path d="M8 24L24 6M14 24L24 12M20 24L24 18" stroke="#a0a0a0" strokeWidth={1.5} />
          </svg>
        </div>
      </div>
    </div>
  )
}
